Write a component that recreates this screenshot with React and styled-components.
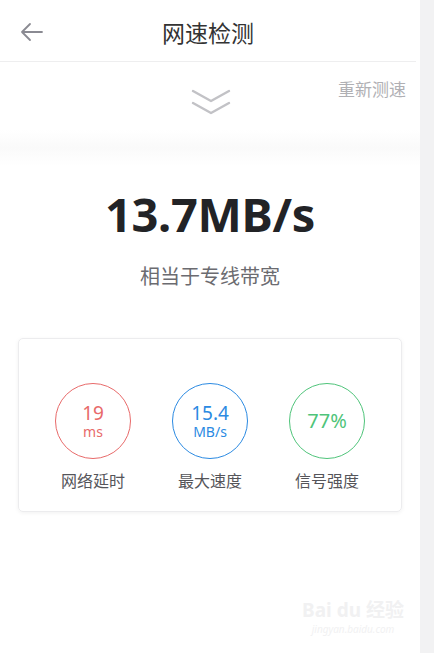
import React from "react";
import styled, { createGlobalStyle } from "styled-components";

const GlobalStyle = createGlobalStyle`
  body {
    margin: 0;
    background: #fff;
    font-family: "Noto Sans", "Noto Sans CJK SC", sans-serif;
  }
`;

const stats = [
  { value: "19", unit: "ms", label: "网络延时", color: "#e86a6a" },
  { value: "15.4", unit: "MB/s", label: "最大速度", color: "#2b8ae2" },
  { value: "77%", unit: null, label: "信号强度", color: "#4fc47a" },
];

export default function App() {
  return (
    <Page>
      <GlobalStyle />
      <Main>
        <Header>
          <BackButton>
            <svg width="24" height="20" viewBox="0 0 24 20" fill="none">
              <path
                d="M22 10H2M10 2L2 10L10 18"
                stroke="#8a8a92"
                strokeWidth="1.8"
                strokeLinecap="round"
                strokeLinejoin="round"
              />
            </svg>
          </BackButton>
          <Title>网速检测</Title>
          <span />
        </Header>

        <TopRow>
          <span />
          <Chevron>
            <svg width="40" height="28" viewBox="0 0 40 28" fill="none">
              <path d="M2 2L20 12L38 2" stroke="#c2c2c6" strokeWidth="2.4" strokeLinecap="round" strokeLinejoin="round" />
              <path d="M2 14L20 24L38 14" stroke="#c2c2c6" strokeWidth="2.4" strokeLinecap="round" strokeLinejoin="round" />
            </svg>
          </Chevron>
          <Retest>重新测速</Retest>
        </TopRow>

        <Band />

        <Speed>13.7MB/s</Speed>
        <Subtitle>相当于专线带宽</Subtitle>

        <Card>
          {stats.map((s) => (
            <Stat key={s.label}>
              <Ring $color={s.color}>
                <RingValue $solo={!s.unit}>{s.value}</RingValue>
                {s.unit && <RingUnit>{s.unit}</RingUnit>}
              </Ring>
              <StatLabel>{s.label}</StatLabel>
            </Stat>
          ))}
        </Card>

        <Watermark>
          <WatermarkLogo>Bai du 经验</WatermarkLogo>
          <WatermarkUrl>jingyan.baidu.com</WatermarkUrl>
        </Watermark>
      </Main>
      <Scrollbar />
    </Page>
  );
}

const Page = styled.div`
  display: flex;
  height: 653px;
  overflow: hidden;
`;

const Main = styled.div`
  position: relative;
  width: 420px;
  display: flex;
  flex-direction: column;
  background: #fff;
`;

const Scrollbar = styled.div`
  width: 14px;
  background: #f2f2f3;
`;

const Header = styled.div`
  height: 61px;
  display: grid;
  grid-template-columns: 60px 1fr 60px;
  align-items: center;
  border-bottom: 1px solid #eeeeef;
  margin-right: 4px;
`;

const BackButton = styled.div`
  display: flex;
  align-items: center;
  padding-left: 20px;
  padding-top: 2px;
`;

const Title = styled.div`
  text-align: center;
  font-size: 23px;
  color: #333;
  padding-top: 2px;
`;

const TopRow = styled.div`
  height: 68px;
  display: grid;
  grid-template-columns: 1fr auto 1fr;
`;

const Chevron = styled.div`
  padding-top: 27px;
  padding-left: 2px;
  display: flex;
`;

const Retest = styled.div`
  justify-self: end;
  padding-top: 17px;
  padding-right: 14px;
  font-size: 17px;
  line-height: 22px;
  color: #b0b0b4;
`;

const Band = styled.div`
  height: 36px;
  background: linear-gradient(to bottom, #ffffff, #fafafa 50%, #ffffff);
`;

const Speed = styled.div`
  margin-top: 18px;
  text-align: center;
  font-size: 47px;
  line-height: 60px;
  font-weight: 700;
  color: #222326;
  letter-spacing: -0.3px;
`;

const Subtitle = styled.div`
  margin-top: 20px;
  text-align: center;
  font-size: 20px;
  line-height: 26px;
  color: #6b6b70;
`;

const Card = styled.div`
  margin: 48px 18px 0;
  padding: 44px 0 19px;
  border: 1px solid #ececee;
  border-radius: 5px;
  box-shadow: 0 1px 4px rgba(0, 0, 0, 0.06);
  display: grid;
  grid-template-columns: repeat(3, 117px);
  justify-content: center;
`;

const Stat = styled.div`
  display: flex;
  flex-direction: column;
  align-items: center;
  gap: 11px;
`;

const Ring = styled.div`
  width: 74px;
  height: 74px;
  border-radius: 50%;
  border: 1.6px solid ${(p) => p.$color};
  color: ${(p) => p.$color};
  display: flex;
  flex-direction: column;
  align-items: center;
  justify-content: center;
  gap: 1px;
`;

const RingValue = styled.div`
  font-size: ${(p) => (p.$solo ? "20px" : "19px")};
  line-height: 20px;
`;

const RingUnit = styled.div`
  font-size: 14px;
  line-height: 15px;
`;

const StatLabel = styled.div`
  font-size: 16px;
  line-height: 22px;
  color: #55555a;
`;

const Watermark = styled.div`
  position: absolute;
  right: 16px;
  bottom: 18px;
  display: flex;
  flex-direction: column;
  align-items: center;
  gap: 3px;
  color: #f1f1f2;
  pointer-events: none;
`;

const WatermarkLogo = styled.div`
  font-size: 19px;
  font-weight: 700;
  line-height: 20px;
`;

const WatermarkUrl = styled.div`
  font-size: 10px;
  font-style: italic;
  line-height: 12px;
`;
